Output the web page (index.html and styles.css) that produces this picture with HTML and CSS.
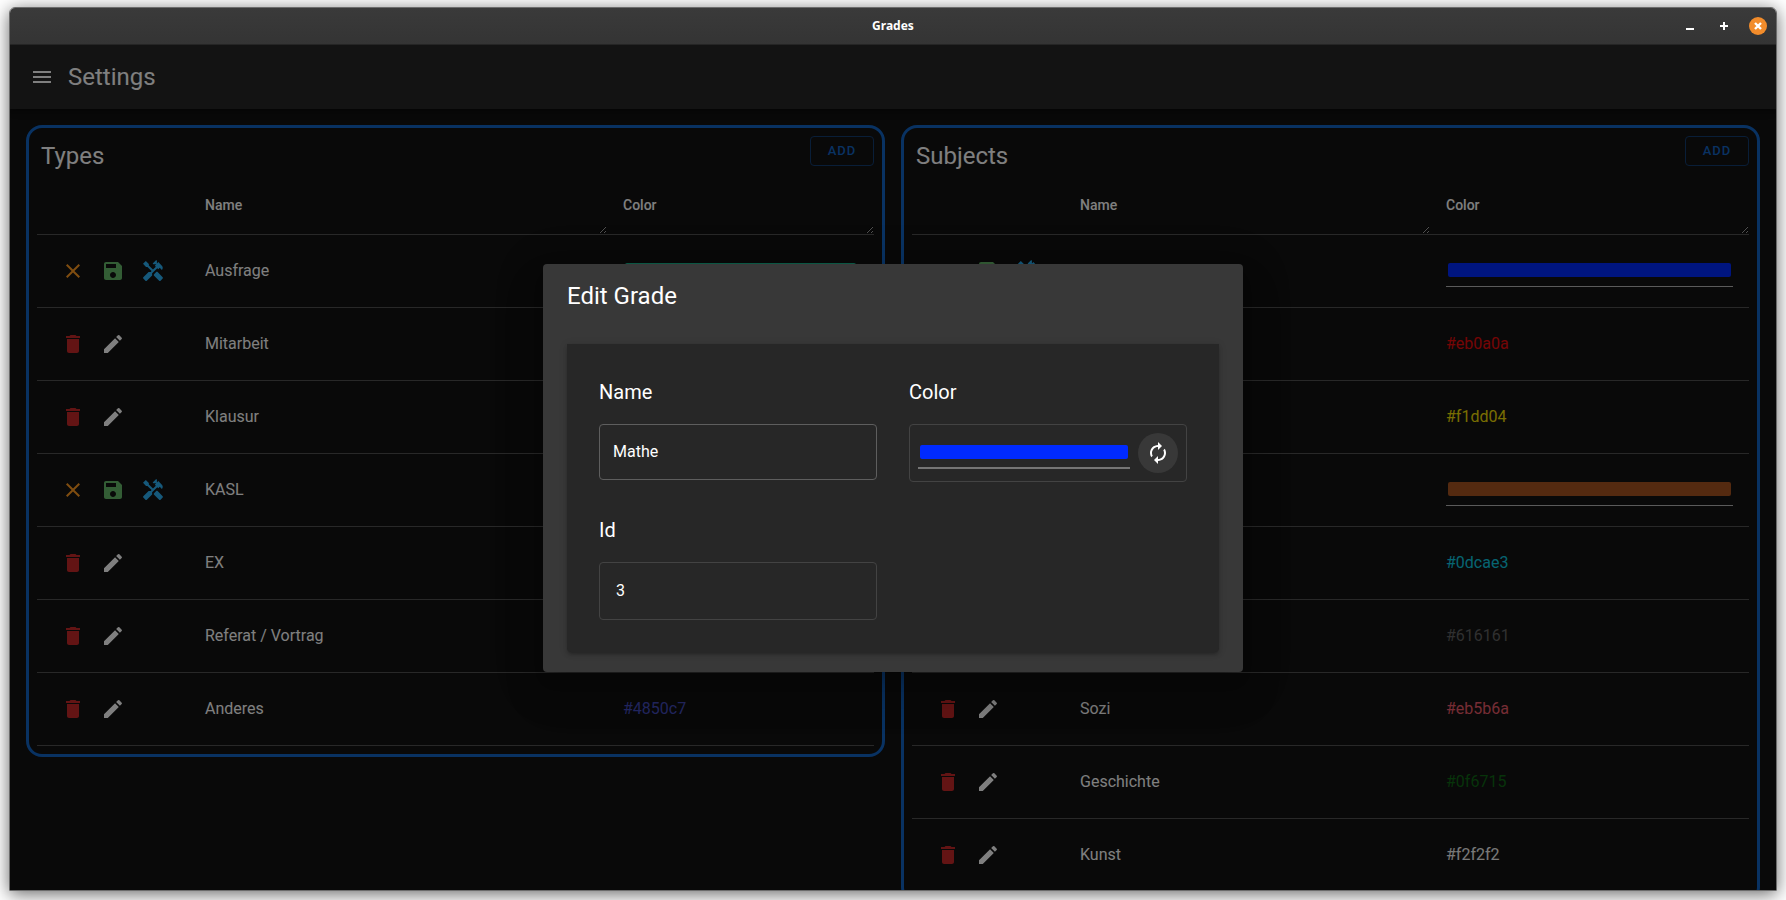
FILE: index.html
```html
<!DOCTYPE html>
<html lang="en">
<head>
<meta charset="utf-8">
<title>Grades</title>
<link rel="stylesheet" href="styles.css">
</head>
<body>
<svg class="sprite" aria-hidden="true">
  <symbol id="i-clear" viewBox="0 0 24 24"><path d="M19 6.41 17.59 5 12 10.59 6.41 5 5 6.41 10.59 12 5 17.59 6.41 19 12 13.41 17.59 19 19 17.59 13.41 12z"/></symbol>
  <symbol id="i-save" viewBox="0 0 24 24"><path d="M17 3H5c-1.11 0-2 .9-2 2v14c0 1.1.89 2 2 2h14c1.1 0 2-.9 2-2V7l-4-4zm-5 16c-1.66 0-3-1.34-3-3s1.34-3 3-3 3 1.34 3 3-1.34 3-3 3zm3-10H5V5h10v4z"/></symbol>
  <symbol id="i-tools" viewBox="0 0 24 24"><path d="m21.67 18.17-5.3-5.3h-.99l-2.54 2.54v.99l5.3 5.3c.39.39 1.02.39 1.41 0l2.12-2.12c.39-.38.39-1.02 0-1.41z"/><path d="m17.34 10.19 1.41-1.41 2.12 2.12c1.17-1.17 1.17-3.07 0-4.24l-3.54-3.54-1.41 1.41V1.71L15.22 1l-3.54 3.54.71.71h2.83l-1.41 1.41 1.06 1.06-2.89 2.89-4.13-4.13V5.06L4.83 2.04 2 4.87 5.03 7.9h1.41l4.13 4.13-.85.85H7.6l-5.3 5.3c-.39.39-.39 1.02 0 1.41l2.12 2.12c.39.39 1.02.39 1.41 0l5.3-5.3v-2.12l5.15-5.15 1.06 1.05z"/></symbol>
  <symbol id="i-delete" viewBox="0 0 24 24"><path d="M6 19c0 1.1.9 2 2 2h8c1.1 0 2-.9 2-2V7H6v12zM19 4h-3.5l-1-1h-5l-1 1H5v2h14V4z"/></symbol>
  <symbol id="i-edit" viewBox="0 0 24 24"><path d="M3 17.25V21h3.75L17.81 9.94l-3.75-3.75L3 17.25zM20.71 7.04c.39-.39.39-1.02 0-1.41l-2.34-2.34a.9959.9959 0 0 0-1.41 0l-1.83 1.83 3.75 3.75 1.83-1.83z"/></symbol>
  <symbol id="i-menu" viewBox="0 0 24 24"><path d="M3 18h18v-2H3v2zm0-5h18v-2H3v2zm0-7v2h18V6H3z"/></symbol>
  <symbol id="i-loop" viewBox="0 0 24 24"><path d="M12 6v3l4-4-4-4v3c-4.42 0-8 3.58-8 8 0 1.57.46 3.03 1.24 4.26L6.7 14.8c-.45-.83-.7-1.79-.7-2.8 0-3.31 2.69-6 6-6zm6.76 1.74L17.3 9.2c.44.84.7 1.79.7 2.8 0 3.31-2.69 6-6 6v-3l-4 4 4 4v-3c4.42 0 8-3.58 8-8 0-1.57-.46-3.03-1.24-4.26z"/></symbol>
</svg>

<div class="window">
  <header class="titlebar">
    <span class="titlebar-text">Grades</span>
    <div class="window-buttons">
      <button class="wbtn" aria-label="Minimize"><svg viewBox="0 0 18 18"><path d="M5 12h8" stroke="#fff" stroke-width="2"/></svg></button>
      <button class="wbtn" aria-label="Maximize"><svg viewBox="0 0 18 18"><path d="M5 9h8M9 5v8" stroke="#fff" stroke-width="2"/></svg></button>
      <button class="wbtn wbtn-close" aria-label="Close"><svg viewBox="0 0 18 18"><path d="M6 6l6 6M12 6l-6 6" stroke="#fff" stroke-width="2.4"/></svg></button>
    </div>
  </header>

  <div class="app">
    <div class="appbar">
      <button class="icon-btn" aria-label="Menu"><svg class="icon"><use href="#i-menu"/></svg></button>
      <h1 class="heading">Settings</h1>
    </div>

    <main class="content">
      <section class="card">
        <div class="card-head"><h2 class="heading">Types</h2><button class="add-btn">ADD</button></div>
        <table class="grid types">
          <thead><tr><th class="actions-col"></th><th class="name-col resizable">Name</th><th class="resizable">Color</th></tr></thead>
          <tbody id="types-body"></tbody>
        </table>
      </section>
      <section class="card">
        <div class="card-head"><h2 class="heading">Subjects</h2><button class="add-btn">ADD</button></div>
        <table class="grid subjects">
          <thead><tr><th class="actions-col"></th><th class="name-col resizable">Name</th><th class="resizable">Color</th></tr></thead>
          <tbody id="subjects-body"></tbody>
        </table>
      </section>
    </main>

    <div class="backdrop">
      <div class="dialog" role="dialog" aria-labelledby="dialog-title">
        <h2 class="heading dialog-title" id="dialog-title">Edit Grade</h2>
        <form class="panel">
          <div class="field">
            <label class="label" for="grade-name">Name</label>
            <input class="text-input" id="grade-name" type="text" value="Mathe">
          </div>
          <div class="field">
            <label class="label" for="grade-color">Color</label>
            <div class="box">
              <input class="color-input active" id="grade-color" type="color" value="#002aff">
              <button class="round-btn" type="button" aria-label="Random color"><svg class="icon"><use href="#i-loop"/></svg></button>
            </div>
          </div>
          <div class="field">
            <span class="label">Id</span>
            <div class="box id-box">3</div>
          </div>
        </form>
      </div>
    </div>
  </div>
</div>
<script src="app.js"></script>
</body>
</html>
```
FILE: styles.css
```css
* { box-sizing: border-box; }

body {
  margin: 0;
  height: 100vh;
  padding: 7px 9px 9px;
  background: #fff;
  color: #fff;
  font-family: Roboto, "Liberation Sans", sans-serif;
  font-size: 16px;
  line-height: 24px;
}

button {
  padding: 0;
  border: 0;
  background: none;
  color: inherit;
  font: inherit;
}

.sprite { display: none; }

.window {
  display: flex;
  flex-direction: column;
  height: 100%;
  border: 1px solid #6c6c6c;
  border-radius: 6px 6px 0 0;
  overflow: hidden;
  box-shadow: 0 3px 18px rgba(0, 0, 0, 0.6);
}

.titlebar {
  position: relative;
  flex: none;
  display: flex;
  align-items: center;
  justify-content: center;
  height: 37px;
  border-bottom: 1px solid #252525;
  background: linear-gradient(#3a3a3a, #343434);
}

.titlebar-text {
  font-family: "Noto Sans", sans-serif;
  font-size: 12px;
  font-weight: 700;
}

.window-buttons {
  position: absolute;
  top: 9px;
  right: 9px;
  display: flex;
  gap: 16px;
}

.wbtn {
  width: 18px;
  height: 18px;
  border-radius: 50%;
}

.wbtn svg { display: block; }
.wbtn-close { background: #f28c2b; }

.app {
  position: relative;
  flex: 1;
  min-height: 0;
  display: flex;
  flex-direction: column;
  background: #121212;
  overflow: hidden;
}

.appbar {
  flex: none;
  display: flex;
  align-items: center;
  gap: 6px;
  height: 64px;
  padding: 0 12px;
  background: #272727;
  box-shadow: 0 2px 4px -1px rgba(0, 0, 0, 0.2), 0 4px 5px rgba(0, 0, 0, 0.14), 0 1px 10px rgba(0, 0, 0, 0.12);
}

.heading {
  margin: 0;
  font-size: 24px;
  font-weight: 400;
  line-height: 32px;
}

.icon {
  display: block;
  width: 24px;
  height: 24px;
  fill: currentColor;
}

.icon-btn {
  display: flex;
  align-items: center;
  justify-content: center;
  width: 40px;
  height: 40px;
}

.content {
  flex: 1;
  min-height: 0;
  display: grid;
  grid-template-columns: 1fr 1fr;
  align-items: start;
  gap: 16px;
  padding: 16px;
}

.card {
  padding: 8px;
  border: 3px solid #1264c4;
  border-radius: 16px;
}

.card-head {
  display: flex;
  align-items: flex-start;
  justify-content: space-between;
  height: 42px;
  padding-left: 4px;
}

.card-head .heading { padding-top: 4px; }

.add-btn {
  width: 64px;
  height: 30px;
  border: 1px solid #123d70;
  border-radius: 4px;
  color: #1264c4;
  font-size: 13px;
  font-weight: 500;
  letter-spacing: 1px;
}

.grid {
  width: 100%;
  table-layout: fixed;
  border-collapse: separate;
  border-spacing: 0;
  color-scheme: dark;
}

.grid th,
.grid td {
  padding: 16px;
  border-bottom: 1px solid #515151;
  text-align: left;
}

.grid th {
  height: 57px;
  padding: 14px 16px 16px;
  font-size: 14px;
  font-weight: 500;
}

.grid td { height: 73px; }

.resizable {
  resize: horizontal;
  overflow: hidden;
}

.actions-col { width: 152px; }
.types .name-col { width: 418px; }
.subjects .name-col { width: 366px; }

.actions { display: flex; }
.warn { color: #ff9a20; }
.ok { color: #66bb6a; }
.info { color: #2cb2f6; }
.danger { color: #c62828; }

.color-input {
  display: block;
  width: 100%;
  height: 32px;
  padding: 4px 0 5px;
  border: 0;
  border-bottom: 1px solid #b5b5b5;
  background: none;
}

.color-input::-webkit-color-swatch-wrapper { padding: 4px 2px; }

.color-input::-webkit-color-swatch {
  border: 0;
  border-radius: 2px;
}

.backdrop {
  position: absolute;
  inset: 0;
  display: flex;
  align-items: center;
  justify-content: center;
  background: rgba(0, 0, 0, 0.5);
}

.dialog {
  width: 700px;
  max-width: calc(100% - 64px);
  padding: 16px 24px 20px;
  border-radius: 4px;
  background: #383838;
  box-shadow: 0 11px 15px -7px rgba(0, 0, 0, 0.2), 0 24px 38px 3px rgba(0, 0, 0, 0.14), 0 9px 46px 8px rgba(0, 0, 0, 0.12);
}

.dialog-title { margin-bottom: 32px; }

.panel {
  display: grid;
  grid-template-columns: 1fr 1fr;
  align-items: start;
  gap: 32px;
  padding: 32px;
  border-radius: 0 0 4px 4px;
  background: #272727;
  box-shadow: 0 3px 3px -2px rgba(0, 0, 0, 0.2), 0 3px 4px rgba(0, 0, 0, 0.14), 0 1px 8px rgba(0, 0, 0, 0.12);
}

.field {
  display: flex;
  flex-direction: column;
  gap: 16px;
}

.label {
  font-size: 20px;
  line-height: 32px;
}

.text-input {
  width: 100%;
  height: 56px;
  padding: 0 13px;
  border: 1px solid #5e5e5e;
  border-radius: 4px;
  background: none;
  color: #fff;
  font: inherit;
}

.box {
  display: flex;
  align-items: center;
  gap: 8px;
  height: 58px;
  padding: 8px;
  border: 1px solid #434343;
  border-radius: 4px;
}

.id-box { padding: 8px 16px; }

.color-input.active {
  flex: 1;
  min-width: 0;
  padding-bottom: 4px;
  border-bottom: 2px solid #757575;
}

.round-btn {
  flex: none;
  display: flex;
  align-items: center;
  justify-content: center;
  width: 40px;
  height: 40px;
  border-radius: 50%;
  background: #383838;
}
```
FILE: app.js
```js
const types = [
  { name: "Ausfrage", color: "#1abc94", editing: true },
  { name: "Mitarbeit" },
  { name: "Klausur" },
  { name: "KASL", color: "#1abc94", editing: true },
  { name: "EX" },
  { name: "Referat / Vortrag" },
  { name: "Anderes", color: "#4850c7" }
];

const subjects = [
  { color: "#002aff", editing: true },
  { color: "#eb0a0a" },
  { color: "#f1dd04" },
  { color: "#a95420", editing: true },
  { color: "#0dcae3" },
  { color: "#616161" },
  { name: "Sozi", color: "#eb5b6a" },
  { name: "Geschichte", color: "#0f6715" },
  { name: "Kunst", color: "#f2f2f2" }
];

const button = (icon, tone, label) =>
  `<button class="icon-btn ${tone}" aria-label="${label}"><svg class="icon"><use href="#i-${icon}"/></svg></button>`;

const row = ({ name = "", color = "", editing }) => `
  <tr>
    <td><div class="actions">${editing
      ? button("clear", "warn", "Cancel") + button("save", "ok", "Save") + button("tools", "info", "Configure")
      : button("delete", "danger", "Delete") + button("edit", "", "Edit")}</div></td>
    <td>${name}</td>
    <td>${editing
      ? `<input class="color-input" type="color" value="${color}" aria-label="Color">`
      : `<span style="color:${color}">${color}</span>`}</td>
  </tr>`;

document.getElementById("types-body").innerHTML = types.map(row).join("");
document.getElementById("subjects-body").innerHTML = subjects.map(row).join("");
```
